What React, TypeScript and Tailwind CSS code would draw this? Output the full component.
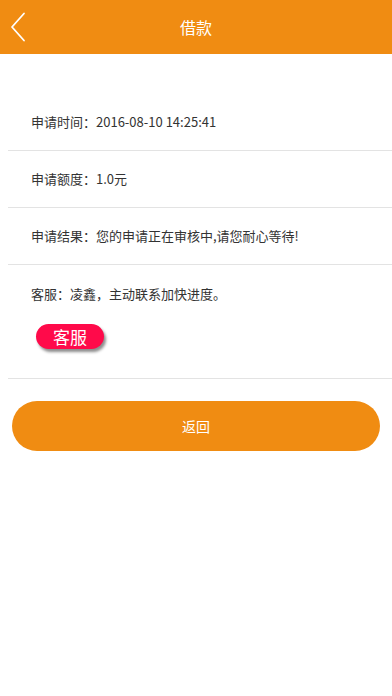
import React from "react";

const font = { fontFamily: '"Noto Sans CJK SC", "Noto Sans", sans-serif' };

export default function App() {
  return (
    <div className="w-[392px] h-[696px] bg-white flex flex-col" style={font}>
      <div className="h-[54px] bg-[#f08c12] flex items-center relative">
        <svg className="absolute left-[10px] top-[12px]" width="16" height="30" viewBox="0 0 16 30">
          <path d="M14 1.5 L2 15 L14 28.5" fill="none" stroke="white" strokeWidth="1.8" strokeLinecap="round" strokeLinejoin="round" />
        </svg>
        <div className="flex-1 text-center text-white text-[16px]">借款</div>
      </div>
      <div className="h-[40px]" />
      <div className="ml-[8px] flex flex-col text-[#333] text-[13px]">
        <div className="h-[57px] border-b border-[#e3e3e3] flex items-center pl-[23px]">
          申请时间：2016-08-10 14:25:41
        </div>
        <div className="h-[57px] border-b border-[#e3e3e3] flex items-center pl-[23px]">
          申请额度：1.0元
        </div>
        <div className="h-[57px] border-b border-[#e3e3e3] flex items-center pl-[23px]">
          <div className="w-[267px] overflow-hidden whitespace-nowrap">申请结果：您的申请正在审核中,请您耐心等待!</div>
        </div>
        <div className="h-[114px] border-b border-[#e3e3e3] flex flex-col pl-[23px] pt-[19px]">
          <div className="leading-[20px]">客服：凌鑫，主动联系加快进度。</div>
          <div className="mt-[20px] ml-[5px] w-[68px] h-[25px] rounded-full bg-[#ff0a4a] text-white text-[17px] flex items-center justify-center shadow-[2px_3px_3px_rgba(0,0,0,0.45)]">
            客服
          </div>
        </div>
      </div>
      <div className="mx-[12px] mt-[22px] h-[50px] rounded-[25px] bg-[#f08c12] flex items-center justify-center text-white text-[14px]">
        返回
      </div>
    </div>
  );
}
